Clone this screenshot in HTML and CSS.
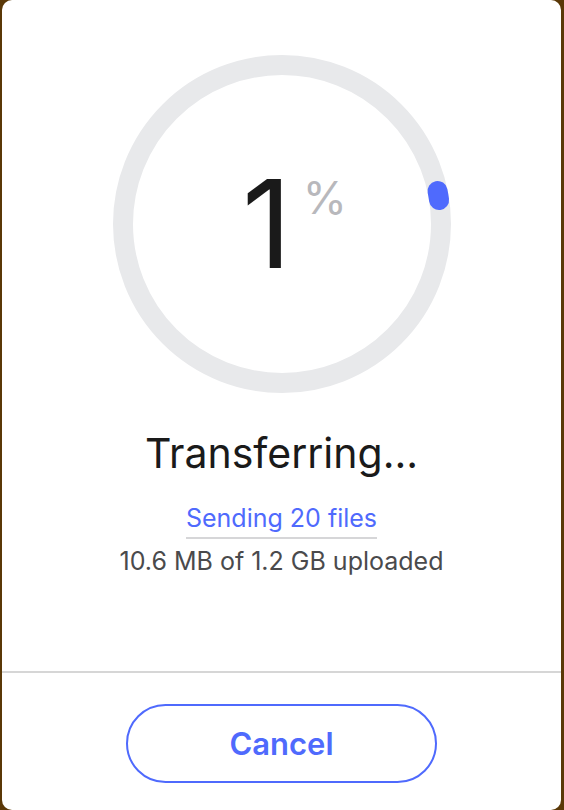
FILE: index.html
```html
<!DOCTYPE html>
<html lang="en">
<head>
<meta charset="utf-8">
<title>Transferring</title>
<link rel="stylesheet" href="styles.css">
</head>
<body>
<div class="card">
  <div class="main">
    <div class="progress">
      <svg class="ring" width="340" height="340" viewBox="0 0 340 340">
        <circle cx="170" cy="170" r="159" fill="none" stroke="#e8e9eb" stroke-width="20"/>
        <path d="M 325.53 136.94 A 159 159 0 0 1 327.08 146.03" fill="none" stroke="#4f6afd" stroke-width="20" stroke-linecap="round"/>
      </svg>
      <div class="value"><span class="num">1</span><span class="pct">%</span></div>
    </div>
    <h1 class="title">Transferring...</h1>
    <div class="sending">Sending 20 files</div>
    <div class="uploaded">10.6 MB of 1.2 GB uploaded</div>
  </div>
  <div class="footer">
    <button class="cancel">Cancel</button>
  </div>
</div>
</body>
</html>
```
FILE: styles.css
```css
html, body {
  margin: 0;
  padding: 0;
}
body {
  background: #5a3807;
  padding: 0 3px 0 2px;
  font-family: "Inter", "Liberation Sans", sans-serif;
}
.card {
  background: #ffffff;
  border-radius: 10px;
  height: 810px;
  display: flex;
  flex-direction: column;
}
.main {
  flex: 1;
  display: flex;
  flex-direction: column;
  align-items: center;
  padding-top: 54px;
}
.progress {
  display: grid;
  width: 340px;
  height: 340px;
}
.ring, .value {
  grid-area: 1 / 1;
}
.value {
  display: flex;
  align-items: flex-start;
  justify-content: center;
  align-self: center;
  padding-left: 26px;
  color: #1a1a1a;
}
.num {
  font-size: 122px;
  line-height: 122px;
  font-weight: 400;
}
.pct {
  font-size: 45px;
  line-height: 44px;
  color: #b8b8bc;
  margin-left: 11px;
  margin-top: 13px;
}
.title {
  margin: 34px 0 0;
  font-size: 41px;
  font-weight: 400;
  line-height: 50px;
  color: #1a1a1a;
}
.sending {
  margin-top: 25px;
  font-size: 25px;
  line-height: 30px;
  color: #4f6afd;
  border-bottom: 2px solid #d6d6d8;
  padding-bottom: 4px;
}
.uploaded {
  margin-top: 7px;
  font-size: 25px;
  line-height: 30px;
  color: #4a4a4c;
}
.footer {
  border-top: 2px solid #d6d6d6;
  display: flex;
  justify-content: center;
  padding: 31px 0 27px;
}
.cancel {
  width: 311px;
  height: 79px;
  border: 2px solid #4f6afd;
  border-radius: 40px;
  background: #fff;
  color: #4f6afd;
  font-family: "Inter", "Liberation Sans", sans-serif;
  font-size: 31px;
  font-weight: 600;
}
```
